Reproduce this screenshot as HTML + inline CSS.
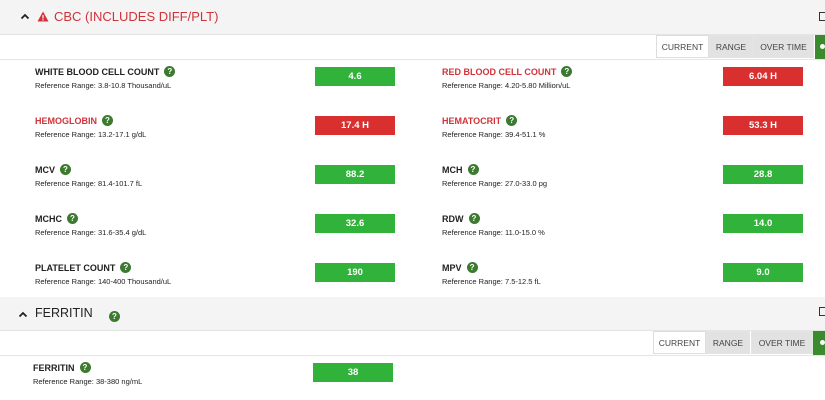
<!DOCTYPE html>
<html><head><style>
body{margin:0;width:825px;height:400px;overflow:hidden;background:#fff;font-family:"Liberation Sans",Arial,sans-serif;position:relative}
.a{position:absolute}
.hdr{left:0;width:825px;background:#f4f4f4;border-bottom:1px solid #e4e4e4}
.line{left:0;width:825px;height:1px;background:#e6e6e6}
.tab{height:23px;line-height:23px;font-size:8.5px;color:#444;text-align:center;background:#e2e2e2;border:1px solid #e4e4e4;box-sizing:border-box}
.tab.cur{background:#fff;border:1px solid #ddd}
.grn{background:#3a8a2e}
.lbl{font-size:9px;font-weight:bold;color:#222;white-space:nowrap}
.lbl.r{color:#d0333a}
.ref{font-size:7.5px;color:#222;white-space:nowrap}
.q{display:inline-block;width:11px;height:11px;border-radius:50%;background:#3b7a2f;color:#fff;font-size:8px;font-weight:bold;text-align:center;line-height:11px;vertical-align:middle;margin-left:5px;position:relative;top:-1px}
.box{width:80px;height:19px;line-height:19px;text-align:center;color:#fff;font-weight:bold;font-size:9.5px;background:#30b23b}
.box.h{background:#d92f2f}
</style></head><body>
<div class="a hdr" style="top:0;height:34px"></div>
<svg class="a" style="left:20px;top:12px" width="10" height="8"><path d="M1.5 6.5 L5 3 L8.5 6.5" stroke="#222" stroke-width="1.8" fill="none"/></svg>
<svg class="a" style="left:37px;top:11px" width="12" height="11"><path d="M6 0.5 L11.5 10.5 L0.5 10.5Z" fill="#d0333a"/><rect x="5.4" y="4" width="1.2" height="3.5" fill="#fff"/><rect x="5.4" y="8.3" width="1.2" height="1.2" fill="#fff"/></svg>
<div class="a" style="left:54px;top:9px;font-size:13px;color:#d0333a">CBC (INCLUDES DIFF/PLT)</div>
<div class="a" style="left:819px;top:12px;width:8px;height:9px;border:1.5px solid #333;box-sizing:border-box"></div>
<div class="a line" style="top:59px"></div>
<div class="a tab cur" style="left:656px;top:35px;width:53px">CURRENT</div>
<div class="a tab" style="left:709px;top:35px;width:44px">RANGE</div>
<div class="a tab" style="left:753px;top:35px;width:61px">OVER TIME</div>
<div class="a grn" style="left:815px;top:35px;width:10px;height:24px"></div>
<div class="a" style="left:820px;top:44px;width:5px;height:5px;border-radius:50%;background:#fff"></div>

<div class="a lbl" style="left:35px;top:67px">WHITE BLOOD CELL COUNT<span class="q">?</span></div>
<div class="a ref" style="left:35px;top:81px">Reference Range: 3.8-10.8 Thousand/uL</div>
<div class="a box" style="left:315px;top:67px">4.6</div>
<div class="a lbl r" style="left:442px;top:67px">RED BLOOD CELL COUNT<span class="q">?</span></div>
<div class="a ref" style="left:442px;top:81px">Reference Range: 4.20-5.80 Million/uL</div>
<div class="a box h" style="left:723px;top:67px">6.04 H</div>

<div class="a lbl r" style="left:35px;top:116px">HEMOGLOBIN<span class="q">?</span></div>
<div class="a ref" style="left:35px;top:130px">Reference Range: 13.2-17.1 g/dL</div>
<div class="a box h" style="left:315px;top:116px">17.4 H</div>
<div class="a lbl r" style="left:442px;top:116px">HEMATOCRIT<span class="q">?</span></div>
<div class="a ref" style="left:442px;top:130px">Reference Range: 39.4-51.1 %</div>
<div class="a box h" style="left:723px;top:116px">53.3 H</div>

<div class="a lbl" style="left:35px;top:165px">MCV<span class="q">?</span></div>
<div class="a ref" style="left:35px;top:179px">Reference Range: 81.4-101.7 fL</div>
<div class="a box" style="left:315px;top:165px">88.2</div>
<div class="a lbl" style="left:442px;top:165px">MCH<span class="q">?</span></div>
<div class="a ref" style="left:442px;top:179px">Reference Range: 27.0-33.0 pg</div>
<div class="a box" style="left:723px;top:165px">28.8</div>

<div class="a lbl" style="left:35px;top:214px">MCHC<span class="q">?</span></div>
<div class="a ref" style="left:35px;top:228px">Reference Range: 31.6-35.4 g/dL</div>
<div class="a box" style="left:315px;top:214px">32.6</div>
<div class="a lbl" style="left:442px;top:214px">RDW<span class="q">?</span></div>
<div class="a ref" style="left:442px;top:228px">Reference Range: 11.0-15.0 %</div>
<div class="a box" style="left:723px;top:214px">14.0</div>

<div class="a lbl" style="left:35px;top:263px">PLATELET COUNT<span class="q">?</span></div>
<div class="a ref" style="left:35px;top:277px">Reference Range: 140-400 Thousand/uL</div>
<div class="a box" style="left:315px;top:263px">190</div>
<div class="a lbl" style="left:442px;top:263px">MPV<span class="q">?</span></div>
<div class="a ref" style="left:442px;top:277px">Reference Range: 7.5-12.5 fL</div>
<div class="a box" style="left:723px;top:263px">9.0</div>

<div class="a hdr" style="top:297px;height:33px"></div>
<svg class="a" style="left:18px;top:310px" width="10" height="8"><path d="M1.5 6.5 L5 3 L8.5 6.5" stroke="#222" stroke-width="1.8" fill="none"/></svg>
<div class="a" style="left:35px;top:306px;font-size:12.5px;color:#222">FERRITIN</div>
<span class="a q" style="left:109px;top:308px;margin:0">?</span>
<div class="a" style="left:819px;top:307px;width:8px;height:9px;border:1.5px solid #333;box-sizing:border-box"></div>
<div class="a line" style="top:355px"></div>
<div class="a tab cur" style="left:653px;top:331px;width:53px">CURRENT</div>
<div class="a tab" style="left:706px;top:331px;width:44px">RANGE</div>
<div class="a tab" style="left:751px;top:331px;width:62px">OVER TIME</div>
<div class="a grn" style="left:813px;top:331px;width:12px;height:24px"></div>
<div class="a" style="left:820px;top:340px;width:5px;height:5px;border-radius:50%;background:#fff"></div>

<div class="a lbl" style="left:33px;top:363px">FERRITIN<span class="q">?</span></div>
<div class="a ref" style="left:33px;top:377px">Reference Range: 38-380 ng/mL</div>
<div class="a box" style="left:313px;top:363px">38</div>
</body></html>
